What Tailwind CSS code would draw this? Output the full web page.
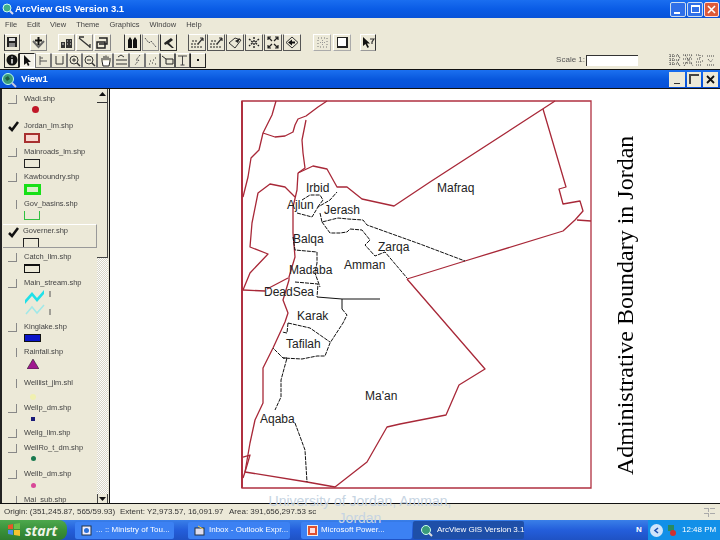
<!DOCTYPE html>
<html lang="en">
  <head>
    <meta charset="UTF-8" />
    <title>ArcView GIS Version 3.1</title>
    <script src="https://cdn.jsdelivr.net/npm/@tailwindcss/browser@4"></script>
  </head>
  <body class="bg-white">
    <div class="relative w-[720px] h-[540px] overflow-hidden flex flex-col bg-[#ece9d8] font-['Liberation_Sans',sans-serif] text-[#333]">
      <!-- Application title bar -->
      <header class="h-[18px] flex items-center bg-gradient-to-b from-[#1a6ef0] via-[#0a5ce6] to-[#0853d8] text-white">
        <svg width="12" height="12" viewBox="0 0 12 12" class="ml-[2px]"><circle cx="5" cy="5" r="4" fill="#3fae8a" stroke="#cfe" stroke-width="1"/><path d="M8 8l3 3" stroke="#dde" stroke-width="2"/></svg>
        <span class="ml-[1px] text-[9.500px] font-bold blur-[0.3px]">ArcView GIS Version 3.1</span>
        <div class="ml-auto mr-[1px] flex gap-[1px]">
          <div class="w-[16px] h-[15px] rounded-[2px] border border-[#cde] bg-[#2f6fe8] flex items-end pl-[3px] pb-[2px]"><div class="w-[6px] h-[2px] bg-white"></div></div>
          <div class="w-[16px] h-[15px] rounded-[2px] border border-[#cde] bg-[#2f6fe8] flex items-center justify-center"><div class="w-[9px] h-[8px] border border-white border-t-2"></div></div>
          <div class="w-[15px] h-[15px] rounded-[2px] border border-[#fdd] bg-[#dd5a3a] flex items-center justify-center"><svg width="9" height="9" viewBox="0 0 9 9"><path d="M1 1l7 7M8 1l-7 7" stroke="#fff" stroke-width="1.600"/></svg></div>
        </div>
      </header>

      <!-- Menu -->
      <nav class="h-[14px] flex items-center gap-[10px] pl-[5px] text-[7.500px] text-[#444] blur-[0.3px]">
        <span>File</span><span>Edit</span><span>View</span><span>Theme</span><span>Graphics</span><span>Window</span><span>Help</span>
      </nav>

      <!-- Button bar -->
      <div class="h-[19px] flex items-center pl-[4px] pt-[1px] blur-[0.3px]">
        <button class="w-[16px] h-[17px] border border-[#555] border-t-[#fff] border-l-[#333] flex items-center justify-center"><svg width="12" height="12" viewBox="0 0 12 12"><path d="M1 1h10v10H1z" fill="#222"/><path d="M3 2h6v3H3z" fill="#ddd"/><path d="M3 7h6v4H3z" fill="#888"/></svg></button>
        <button class="ml-[10px] w-[17px] h-[17px] border border-[#888] border-t-[#fff] border-l-[#fff] flex items-center justify-center"><svg width="13" height="13" viewBox="0 0 13 13"><path d="M1 5l5.500 6 5.500-6" fill="none" stroke="#666" stroke-width="2"/><path d="M6.500 1v8M3 4.500h7" stroke="#111" stroke-width="2"/></svg></button>
        <div class="ml-[11px] flex gap-[1px]">
          <button class="w-[17px] h-[17px] border border-[#888] border-t-[#fff] border-l-[#fff] flex items-center justify-center"><svg width="13" height="13" viewBox="0 0 13 13"><path d="M1 12V6h4v6zM6 12V3h6v9z" fill="#333"/><path d="M7 5h1M10 5h1M7 8h1M10 8h1M2 8h2" stroke="#ddd"/></svg></button>
          <button class="w-[17px] h-[17px] border border-[#888] border-t-[#fff] border-l-[#fff] flex items-center justify-center"><svg width="13" height="13" viewBox="0 0 13 13"><path d="M1 2l11 9M1 1h5M12 12v-4" stroke="#333" stroke-width="1.300" fill="none"/></svg></button>
          <button class="w-[17px] h-[17px] border border-[#888] border-t-[#fff] border-l-[#fff] flex items-center justify-center"><svg width="13" height="13" viewBox="0 0 13 13"><path d="M3 2h8v6H3M1 6h8v6H1z" fill="none" stroke="#222" stroke-width="1.500"/></svg></button>
        </div>
        <div class="ml-[13px] flex gap-[1px]">
          <button class="w-[17px] h-[17px] border border-[#333] border-t-[#fff] flex items-center justify-center"><svg width="13" height="13" viewBox="0 0 13 13"><path d="M2 12V4l2-3 2 3v8zM7 12V4l2-3 2 3v8z" fill="#111"/></svg></button>
          <button class="w-[17px] h-[17px] border border-[#888] border-t-[#fff] flex items-center justify-center"><svg width="13" height="13" viewBox="0 0 13 13"><path d="M1 2l4 5 2-2 5 6" fill="none" stroke="#555" stroke-dasharray="2 1"/></svg></button>
          <button class="w-[17px] h-[17px] border border-[#333] border-t-[#fff] flex items-center justify-center"><svg width="13" height="13" viewBox="0 0 13 13"><path d="M2 7l7-5 2 2-4 3 5 5-2 0-5-4-2 1z" fill="#222"/></svg></button>
        </div>
        <div class="ml-[11px] flex gap-[1px]">
          <button class="w-[18px] h-[17px] border border-[#555] border-t-[#fff] flex items-center justify-center"><svg width="14" height="13" viewBox="0 0 14 13"><path d="M1 11h12M1 8h9M2 5h6" stroke="#222" stroke-dasharray="2 1"/><path d="M8 8l5-6M13 2l-3 0M13 2v3" stroke="#333" stroke-width="1.200" fill="none"/></svg></button>
          <button class="w-[18px] h-[17px] border border-[#555] border-t-[#fff] flex items-center justify-center"><svg width="14" height="13" viewBox="0 0 14 13"><path d="M1 11h12M1 8h9M2 5h6" stroke="#222" stroke-dasharray="2 1"/><path d="M8 8l5-6M13 2l-3 0M13 2v3" stroke="#333" stroke-width="1.200" fill="none"/></svg></button>
          <button class="w-[18px] h-[17px] border border-[#555] border-t-[#fff] flex items-center justify-center"><svg width="14" height="13" viewBox="0 0 14 13"><path d="M1 7l6-5 6 2-6 8z" fill="none" stroke="#333"/><path d="M7 5l5-3-2 5z" fill="#222"/></svg></button>
          <button class="w-[18px] h-[17px] border border-[#555] border-t-[#fff] flex items-center justify-center"><svg width="14" height="13" viewBox="0 0 14 13"><path d="M2 3l4 3.500-4 3.500M12 3L8 6.500l4 3.500M7 1v11" fill="none" stroke="#222" stroke-width="1.400" stroke-dasharray="2 1"/></svg></button>
          <button class="w-[18px] h-[17px] border border-[#555] border-t-[#fff] flex items-center justify-center"><svg width="14" height="13" viewBox="0 0 14 13"><path d="M6 5L2 1M2 4V1h3M8 5l4-4M9 1h3v3M6 8l-4 4M2 9v3h3M8 8l4 4M12 9v3H9" fill="none" stroke="#222" stroke-width="1.200"/></svg></button>
          <button class="w-[18px] h-[17px] border border-[#555] border-t-[#fff] flex items-center justify-center"><svg width="14" height="13" viewBox="0 0 14 13"><path d="M7 1l6 5.500-6 5.500-6-5.500z" fill="none" stroke="#333"/><path d="M3 6.500l4-3v2h3v2H7v2z" fill="#111"/></svg></button>
        </div>
        <div class="ml-[12px] flex gap-[2px]">
          <button class="w-[18px] h-[17px] border border-[#aaa] border-t-[#fff] border-l-[#fff] flex items-center justify-center"><svg width="13" height="13" viewBox="0 0 13 13"><path d="M2 2h9v9H2z" fill="none" stroke="#777" stroke-dasharray="1 2"/><path d="M6.500 4v5M4 6.500h5" stroke="#999" stroke-dasharray="1 1"/></svg></button>
          <button class="w-[18px] h-[17px] border border-[#aaa] border-t-[#fff] border-l-[#fff] flex items-center justify-center"><div class="w-[11px] h-[11px] border border-[#222] border-r-2 border-b-2 bg-white"></div></button>
        </div>
        <button class="ml-[9px] w-[16px] h-[17px] border border-[#333] border-t-[#fff] border-l-[#fff] border-b-[#999] flex items-center justify-center"><svg width="13" height="13" viewBox="0 0 13 13"><path d="M1 1v9l2.500-2 2 4 1.500-1-2-3.500h3z" fill="#111"/><path d="M8 3h4l-2 3v2" fill="none" stroke="#333" stroke-width="1.200"/></svg></button>
      </div>

      <!-- Tool bar -->
      <div class="h-[18px] flex items-center pl-[4px] relative blur-[0.3px]">
        <div class="flex">
          <button class="w-[15px] h-[15px] border border-[#222] border-t-[#fff] flex items-center justify-center"><svg width="12" height="12" viewBox="0 0 12 12"><circle cx="6" cy="6" r="5.500" fill="#111"/><path d="M6 2.500v1M6 5v4.500" stroke="#eee" stroke-width="1.500"/></svg></button>
          <button class="w-[16px] h-[15px] border border-[#222] border-b-[#fff] border-r-[#fff] bg-[#f4f2e8] flex items-center justify-center"><svg width="10" height="11" viewBox="0 0 10 11"><path d="M2 0v10l2.500-2 1.500 3 1.500-1-1.500-3H9z" fill="#111"/></svg></button>
          <button class="w-[16px] h-[15px] border border-[#777] border-t-[#fff] flex items-center justify-center"><svg width="11" height="11" viewBox="0 0 11 11"><path d="M2 1v9M2 3h3M2 6h7" stroke="#555" fill="none"/></svg></button>
          <button class="w-[16px] h-[15px] border border-[#777] border-t-[#fff] flex items-center justify-center"><svg width="11" height="11" viewBox="0 0 11 11"><path d="M2 1v8h7V1" stroke="#333" fill="none"/></svg></button>
          <button class="w-[15px] h-[15px] border border-[#777] border-t-[#fff] flex items-center justify-center"><svg width="13" height="13" viewBox="0 0 13 13"><circle cx="6" cy="6" r="4" fill="none" stroke="#333"/><path d="M9 9l3 3" stroke="#333" stroke-width="1.500"/><path d="M4 6h4M6 4v4" stroke="#333"/></svg></button>
          <button class="w-[15px] h-[15px] border border-[#777] border-t-[#fff] flex items-center justify-center"><svg width="13" height="13" viewBox="0 0 13 13"><circle cx="6" cy="6" r="4" fill="none" stroke="#333"/><path d="M9 9l3 3" stroke="#333" stroke-width="1.500"/><path d="M4 6h4" stroke="#333"/></svg></button>
          <button class="w-[16px] h-[15px] border border-[#777] border-t-[#fff] flex items-center justify-center"><svg width="13" height="13" viewBox="0 0 13 13"><path d="M3 7V4M5 6V2M7 6V1.500M9 6V2.500M11 7V4M3 7l1 5h6l1-5" fill="#fff" stroke="#222"/></svg></button>
          <button class="w-[16px] h-[15px] border border-[#777] border-t-[#fff] flex items-center justify-center"><svg width="13" height="12" viewBox="0 0 13 12"><path d="M1 6h11M1 10h11M3 3l3-2 3 2" stroke="#333" fill="none"/></svg></button>
          <button class="w-[16px] h-[15px] border border-[#777] border-t-[#fff] flex items-center justify-center"><svg width="11" height="12" viewBox="0 0 11 12"><path d="M8 1L4 6h3l-4 5" stroke="#555" fill="none" stroke-dasharray="2 1"/></svg></button>
          <button class="w-[15px] h-[15px] border border-[#777] border-t-[#fff] flex items-center justify-center"><svg width="11" height="11" viewBox="0 0 11 11"><path d="M2 9h1M5 8h1M8 9h1M3 6h1M6 5h1M8 3h1" stroke="#333"/></svg></button>
          <button class="w-[15px] h-[15px] border border-[#555] border-t-[#fff] flex items-center justify-center"><svg width="13" height="11" viewBox="0 0 13 11"><path d="M1 1l4 3h7v5H5V4" stroke="#222" fill="none"/></svg></button>
          <button class="w-[15px] h-[15px] border border-[#555] border-t-[#fff] flex items-center justify-center"><svg width="11" height="11" viewBox="0 0 11 11"><path d="M1 1h9M5.500 1v9M3.500 10h4" stroke="#444" fill="none"/></svg></button>
          <button class="w-[16px] h-[15px] border border-[#222] border-t-[#fff] flex items-center justify-center"><div class="w-[2px] h-[2px] bg-[#111]"></div></button>
        </div>
        <span class="ml-auto text-[8px] text-[#555]">Scale 1:</span>
        <div class="ml-[1px] w-[52px] h-[11px] bg-white border-l border-t border-[#333]"></div>
        <div class="ml-[31px] mr-[5px] flex items-center gap-[1px] h-[15px]">
          <svg width="12" height="14" viewBox="0 0 12 14"><path d="M1 1v12M4 1v12M1 3h10M1 7h10M1 11h10M8 1l3 4-3 4 3 4" fill="none" stroke="#444" stroke-dasharray="1 1"/></svg>
          <svg width="12" height="14" viewBox="0 0 12 14"><path d="M1 2h10M1 6h10M1 10h10M2 13l8-11M3 2l8 11" fill="none" stroke="#444" stroke-dasharray="1 1"/></svg>
          <svg width="10" height="14" viewBox="0 0 10 14"><path d="M1 2h4v4H1M1 9h5M1 12h5M7 3h2M7 8h2" fill="none" stroke="#444" stroke-dasharray="1 1"/></svg>
          <svg width="9" height="14" viewBox="0 0 9 14"><path d="M1 3h7M2 6l2.500 3L7 6M1 12h7" fill="none" stroke="#444" stroke-dasharray="1 1"/></svg>
        </div>
      </div>

      <!-- View window title -->
      <div class="h-[20px] flex items-center border-t border-[#111] bg-gradient-to-b from-[#1b70f0] via-[#0857dd] to-[#0850d8] text-white">
        <svg width="16" height="16" viewBox="0 0 16 16" class="ml-[1px]"><circle cx="7" cy="7" r="5.500" fill="#3a9c7a" stroke="#bfe" stroke-width="1"/><path d="M4 6l3-2 2 3-3 2z" fill="#1d5c44"/><path d="M11 11l4 4" stroke="#c8c8e0" stroke-width="2"/></svg>
        <span class="ml-[4px] text-[9.500px] font-bold blur-[0.3px]">View1</span>
        <div class="ml-auto mr-[2px] flex">
          <button class="w-[16px] h-[15px] bg-[#ece9d8] flex items-end justify-center pb-[3px]"><div class="w-[6px] h-[1px] bg-[#333]"></div></button>
          <button class="ml-[2px] w-[14px] h-[15px] bg-[#ece9d8] flex items-start justify-start pl-[2px] pt-[2px]"><div class="w-[10px] h-[10px] border-l-2 border-t-2 border-[#444]"></div></button>
          <button class="ml-[2px] w-[15px] h-[15px] bg-[#ece9d8] flex items-center justify-center"><svg width="9" height="9" viewBox="0 0 9 9"><path d="M1 1l7 7M8 1l-7 7" stroke="#111" stroke-width="1.800"/></svg></button>
        </div>
      </div>

      <!-- View body: table of contents and map -->
      <main class="h-[416px] flex border-y border-[#111] -mt-[1px]">
        <aside class="w-[110px] h-full flex shrink-0 border-l-2 border-[#222] pl-[1px] border-r border-r-[#111]">
          <div class="w-[94px] h-full overflow-hidden pt-[3px] text-[7.500px] text-[#444] leading-[10px] blur-[0.3px]">
            <div class="h-[27px] pl-[21px] pt-[2px] relative"><div class="absolute left-[5px] top-[3px] w-[9px] h-[9px] border-r border-b border-[#888]"></div>Wadi.shp<div class="w-[7px] h-[7px] ml-[8px] mt-[2px] rounded-full bg-[#c01828]"></div></div>
            <div class="h-[26px] pl-[21px] pt-[2px] relative"><svg width="12" height="11" viewBox="0 0 12 11" class="absolute left-[5px] top-[2px]"><path d="M1 6l3 3 6-8" fill="none" stroke="#111" stroke-width="2.500"/></svg>Jordan_lm.shp<div class="w-[16px] h-[10px] mt-[2px] border-2 border-[#a83030] bg-[#f8d8d0]"></div></div>
            <div class="h-[25px] pl-[21px] pt-[2px] relative"><div class="absolute left-[5px] top-[3px] w-[9px] h-[9px] border-r border-b border-[#888]"></div>Mainroads_lm.shp<div class="w-[16px] h-[9px] mt-[2px] border border-[#222]"></div></div>
            <div class="h-[27px] pl-[21px] pt-[2px] relative"><div class="absolute left-[5px] top-[3px] w-[9px] h-[9px] border-r border-b border-[#888]"></div>Kawboundry.shp<div class="w-[17px] h-[11px] mt-[2px] border-[3px] border-[#18e018] bg-[#d8f0c8]"></div></div>
            <div class="h-[27px] pl-[21px] pt-[2px] relative"><div class="absolute left-[5px] top-[3px] w-[9px] h-[9px] border-r border-[#888]"></div>Gov_basins.shp<div class="w-[16px] h-[9px] mt-[2px] border-l border-r border-b border-[#30c040]"></div></div>
            <div class="h-[24px] mb-[2px] pl-[20px] pt-[1px] relative border border-[#999] border-t-[#fff] border-l-[#fff] -ml-[1px]"><svg width="12" height="11" viewBox="0 0 12 11" class="absolute left-[5px] top-[2px]"><path d="M1 6l3 3 6-8" fill="none" stroke="#111" stroke-width="2.500"/></svg>Governer.shp<div class="w-[16px] h-[9px] mt-[2px] border-l border-r border-t border-[#222]"></div></div>
            <div class="h-[26px] pl-[21px] pt-[2px] relative"><div class="absolute left-[5px] top-[3px] w-[9px] h-[9px] border-r border-b border-[#888]"></div>Catch_llm.shp<div class="w-[16px] h-[9px] mt-[2px] border border-t-2 border-[#111]"></div></div>
            <div class="h-[44px] pl-[21px] pt-[2px] relative"><div class="absolute left-[5px] top-[3px] w-[9px] h-[9px] border-r border-b border-[#888]"></div>Main_stream.shp
              <svg width="30" height="32" viewBox="0 0 30 32" class="block"><path d="M1 12l7-8 5 6 7-8v4l-7 8-5-6-7 8z" fill="#20e0e8"/><path d="M2 26l6-7 5 6 7-8" fill="none" stroke="#a0e8e8" stroke-width="1.500"/><path d="M26 3v6M26 21v6" stroke="#555"/></svg>
            </div>
            <div class="h-[25px] pl-[21px] pt-[2px] relative"><div class="absolute left-[5px] top-[3px] w-[9px] h-[9px] border-r border-b border-[#888]"></div>Kinglake.shp<div class="w-[17px] h-[8px] mt-[2px] bg-[#0a14c8] border border-[#111]"></div></div>
            <div class="h-[31px] pl-[21px] pt-[2px] relative"><div class="absolute left-[5px] top-[3px] w-[9px] h-[9px] border-r border-[#888]"></div>Rainfall.shp<svg width="12" height="10" viewBox="0 0 12 10" class="block ml-[3px] mt-[2px]"><path d="M6 0l6 10H0z" fill="#a01890" stroke="#222" stroke-width="0.600"/></svg></div>
            <div class="h-[25px] pl-[21px] pt-[2px] relative"><div class="absolute left-[5px] top-[3px] w-[9px] h-[9px] border-r border-[#888]"></div>Welllist_jlm.shl<div class="w-[6px] h-[6px] ml-[6px] mt-[6px] rounded-full bg-[#f0f0b0]"></div></div>
            <div class="h-[25px] pl-[21px] pt-[2px] relative"><div class="absolute left-[5px] top-[3px] w-[9px] h-[9px] border-r border-b border-[#888]"></div>Wellp_dm.shp<div class="w-[4px] h-[4px] ml-[7px] mt-[4px] bg-[#1a1a78]"></div></div>
            <div class="h-[15px] pl-[21px] pt-[2px] relative"><div class="absolute left-[5px] top-[3px] w-[9px] h-[9px] border-r border-b border-[#888]"></div>Wellg_llm.shp</div>
            <div class="h-[26px] pl-[21px] pt-[2px] relative"><div class="absolute left-[5px] top-[3px] w-[9px] h-[9px] border-r border-b border-[#888]"></div>WellRo_t_dm.shp<div class="w-[5px] h-[5px] ml-[7px] mt-[3px] rounded-full bg-[#1a7a50]"></div></div>
            <div class="h-[26px] pl-[21px] pt-[2px] relative"><div class="absolute left-[5px] top-[3px] w-[9px] h-[9px] border-r border-b border-[#888]"></div>Wellb_dm.shp<div class="w-[5px] h-[5px] ml-[7px] mt-[4px] rounded-full bg-[#d84898]"></div></div>
            <div class="h-[14px] pl-[21px] pt-[2px] relative"><div class="absolute left-[5px] top-[3px] w-[9px] h-[9px] border-r border-[#888]"></div>Mai_sub.shp</div>
          </div>
          <!-- Legend scrollbar -->
          <div class="w-[11px] h-full flex flex-col bg-[repeating-conic-gradient(#d8d5c8_0_25%,#fdfdfb_0_50%)] bg-[length:2px_2px]">
            <div class="h-[169px] bg-[#ece9d8] border-r border-b border-[#444] flex flex-col items-center">
              <svg width="7" height="4" viewBox="0 0 7 4" class="mt-[3px]"><path d="M3.500 0L7 4H0z" fill="#111"/></svg>
              <div class="mt-[6px] w-full border-t border-[#333]"></div>
            </div>
            <div class="mt-auto h-[9px] bg-[#ece9d8] border-l border-r border-[#444] flex items-center justify-center"><svg width="7" height="4" viewBox="0 0 7 4"><path d="M3.500 4L7 0H0z" fill="#111"/></svg></div>
          </div>
        </aside>

        <!-- Map display -->
        <svg viewBox="110 89 610 414" class="block w-[610px] h-full bg-white font-['Liberation_Sans',sans-serif]">
          <path d="M242 101H591V488H242Z" fill="none" stroke="#b03040" stroke-width="1.300"/>
          <path d="M242 101V488" stroke="#b03040" stroke-width="2"/>
          <g fill="none" stroke="#a82838" stroke-width="1.300" stroke-linejoin="round">
            <path d="M276 101L272 115L263 133L259 150L251 158L248 177L243 197"/>
            <path d="M327 101L318 107L306 116L298 119L295 125L293 132L285 136L275 137L263 133"/>
            <path d="M306 120L302 140L303 153L305 168L298 173"/>
            <path d="M298 173L313 166L327 169L337 187L347 187L362 199L394 206L430 182L555 101"/>
            <path d="M543 109L566 187L559 189L563 204L580 201L583 211L575 220L563 231L465 261L420 275L407 279"/>
            <path d="M577 220L591 221"/>
            <path d="M407 279L485 369L459 385L446 415L400 424L387 427L367 462L335 487L307 482L245 472"/>
            <path d="M298 173L297 190L293 207L293 233L295 257L289 277L289 280L283 300L288 313L285 322L273 348L263 368L263 403L255 420L250 443L245 472L243 478"/>
            <path d="M243 290L250 273L268 254L250 247L252 223L258 193L270 184L285 187L295 197"/>
            <path d="M267 289L288 278"/>
            <path d="M243 290L265 291"/>
            <path d="M243 457L250 455L248 462L245 472"/>
          </g>
          <g fill="none" stroke="#111" stroke-width="1" stroke-dasharray="4 1">
            <path d="M297 213L312 217L318 207L330 200L337 192"/>
            <path d="M302 200L310 195L320 195L323 200L317 208"/>
            <path d="M322 222L330 233L340 233L347 232L350 229L362 230L370 240L365 245L375 256L385 252L407 278"/>
            <path d="M320 213L322 222L338 218L348 219L363 220L367 225L420 244L465 261"/>
            <path d="M293 237L295 250L317 252L317 263L315 273L320 287"/>
            <path d="M295 282L318 284L317 297"/>
            <path d="M288 323L310 328L330 342"/>
            <path d="M288 323L287 333L282 332"/>
            <path d="M283 358L287 358L281 380L281 397L275 410"/>
            <path d="M295 423L305 450L307 482"/>
            <path d="M342 309L347 315L343 323L330 343L325 356L317 356L302 359L283 358L273 348"/>
          </g>
          <path d="M317 297L342 299H380M342 299V309" fill="none" stroke="#111"/>
          <g font-size="12" fill="#222">
            <text x="306" y="192">Irbid</text>
            <text x="287" y="209">Ajlun</text>
            <text x="324" y="214">Jerash</text>
            <text x="293" y="243">Balqa</text>
            <text x="289" y="274">Madaba</text>
            <text x="264" y="296">DeadSea</text>
            <text x="297" y="320">Karak</text>
            <text x="286" y="348">Tafilah</text>
            <text x="365" y="400">Ma'an</text>
            <text x="260" y="423">Aqaba</text>
            <text x="378" y="251">Zarqa</text>
            <text x="344" y="269">Amman</text>
            <text x="437" y="192">Mafraq</text>
          </g>
        </svg>
      </main>

      <!-- Status bar -->
      <footer class="h-[16px] flex items-center pl-[4px] text-[8px] text-[#333] whitespace-nowrap relative">
        <span class="w-[116px] blur-[0.3px]">Origin: (351,245.87, 565/59.93)</span>
        <span class="w-[109px] blur-[0.3px]">Extent: Y2,973.57, 16,091.97</span>
        <span class="blur-[0.3px]">Area: 391,656,297.53 sc</span>
        <div class="ml-auto mr-[5px] grid grid-cols-2 gap-[1px]">
          <div class="w-[5px] h-[4px] border-t border-r border-[#aaa]"></div><div class="w-[5px] h-[4px] border-t border-[#aaa]"></div>
          <div class="w-[5px] h-[4px] border-t border-r border-[#aaa]"></div><div class="w-[5px] h-[4px] border-t border-[#aaa]"></div>
        </div>
      </footer>

      <!-- Windows taskbar -->
      <div class="h-[20px] flex items-center bg-gradient-to-b from-[#3a7fe8] via-[#245edb] to-[#1f52c4] text-white text-[8px] whitespace-nowrap">
        <div class="w-[67px] h-full rounded-r-[8px] bg-gradient-to-b from-[#4da84d] via-[#3a913a] to-[#2f7d2f] flex items-center pl-[7px] gap-[4px]">
          <svg width="14" height="14" viewBox="0 0 14 14"><path d="M1 2l5-1v5H1z" fill="#e8562a"/><path d="M7 1l6-1v6H7z" fill="#6cc04a"/><path d="M1 7h5v5l-5-1z" fill="#4a90e8"/><path d="M7 7h6v6l-6-1z" fill="#f4c430"/></svg>
          <span class="text-[14px] font-bold italic font-['Open_Sans',sans-serif] text-[#f0f4e8]">start</span>
        </div>
        <div class="ml-[8px] w-[99px] h-[17px] rounded-[2px] bg-[#3c81f3] flex items-center pl-[6px] gap-[4px]"><svg width="11" height="11" viewBox="0 0 11 11" class="shrink-0"><rect x="1" y="1" width="9" height="9" fill="#eef" stroke="#234"/><circle cx="5.500" cy="5.500" r="2.500" fill="#2a70d8"/></svg><span class="blur-[0.3px]">... :: Ministry of Tou...</span></div>
        <div class="ml-[14px] w-[102px] h-[17px] rounded-[2px] bg-[#3c81f3] flex items-center pl-[6px] gap-[4px]"><svg width="11" height="11" viewBox="0 0 11 11" class="shrink-0"><rect x="1" y="3" width="9" height="7" fill="#dde" stroke="#234"/><path d="M4 1l5 3" stroke="#fc3"/></svg><span class="blur-[0.3px]">Inbox - Outlook Expr...</span></div>
        <div class="ml-[11px] w-[111px] h-[17px] rounded-[2px] bg-[#3c81f3] flex items-center pl-[6px] gap-[3px]"><svg width="11" height="11" viewBox="0 0 11 11" class="shrink-0"><rect x="0.500" y="0.500" width="10" height="10" fill="#e05030" stroke="#eee"/><rect x="3" y="3" width="5" height="5" fill="#fdd"/></svg><span class="blur-[0.3px]">Microsoft Power...</span></div>
        <div class="ml-[1px] w-[111px] h-[18px] rounded-[2px] bg-[#1e4fa8] flex items-center pl-[7px] gap-[4px]"><svg width="13" height="13" viewBox="0 0 13 13" class="shrink-0"><circle cx="6" cy="6" r="4.500" fill="#3a9c7a" stroke="#cfe"/><path d="M9 9l3 3" stroke="#ddd" stroke-width="2"/></svg><span class="blur-[0.3px]">ArcView GIS Version 3.1</span></div>
        <span class="ml-[112px] w-[12px] font-bold">N</span>
        <div class="h-full w-[72px] flex items-center bg-[#1290e8] pl-[2px] gap-[2px]">
          <div class="w-[13px] h-[13px] rounded-full bg-[#cfe4fa] flex items-center justify-center"><svg width="7" height="7" viewBox="0 0 7 7"><path d="M5 1L2 3.500 5 6" fill="none" stroke="#1c50b0" stroke-width="1.600"/></svg></div>
          <svg width="12" height="13" viewBox="0 0 12 13"><path d="M3 1h6v6H3z" fill="#2a8a60"/><circle cx="8" cy="9" r="3" fill="#d03030"/></svg>
          <span class="ml-[3px] blur-[0.3px]">12:48 PM</span>
        </div>
      </div>

      <!-- Slide text over the screenshot -->
      <div class="absolute left-[611px] top-[133px] h-[342px] [writing-mode:vertical-rl] rotate-180 font-['Liberation_Serif',serif] text-[24px] leading-[28px] whitespace-nowrap text-black">Administrative Boundary in Jordan</div>
      <div class="absolute left-[260px] top-[493px] w-[200px] text-center text-[14px] leading-[17px] text-[#c6d4e2]">University of Jordan, Amman, Jordan</div>
    </div>
  </body>
</html>
